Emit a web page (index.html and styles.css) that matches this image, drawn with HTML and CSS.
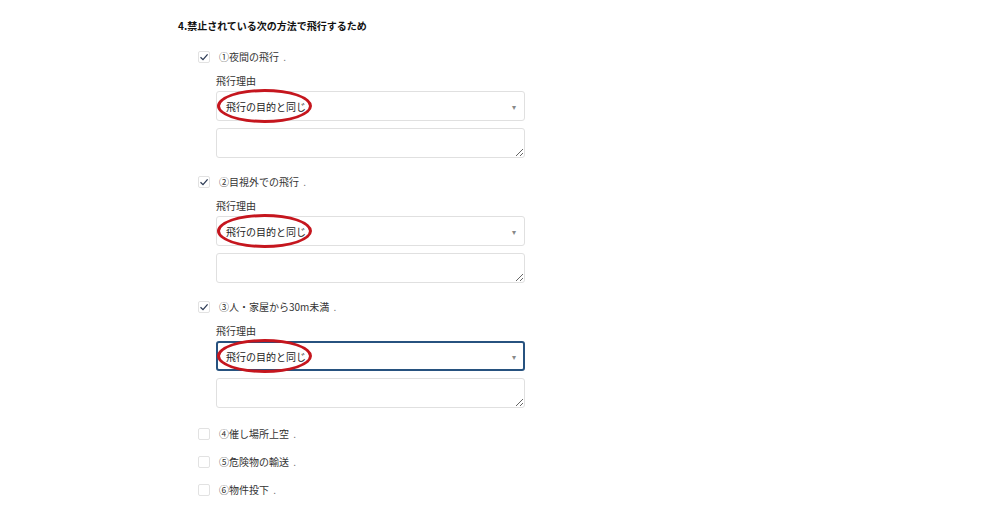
FILE: index.html
```html
<!DOCTYPE html>
<html lang="ja">
<head>
<meta charset="utf-8">
<link rel="stylesheet" href="styles.css">
</head>
<body>
<div class="page">
  <h2 class="heading">4.禁止されている次の方法で飛行するため</h2>

  <div class="item item--open">
    <div class="row">
      <span class="cb cb--on"><svg viewBox="0 0 12 12" width="12" height="12"><path d="M2.5 6.2 L5 8.6 L9.6 3.4" fill="none" stroke="#2d3b55" stroke-width="1.3"/></svg></span>
      <span class="label">①夜間の飛行<span class="dot"> .</span></span>
    </div>
    <div class="sub">
      <div class="field-label">飛行理由</div>
      <div class="select-wrap">
        <div class="select"><span>飛行の目的と同じ</span><span class="arrow">▾</span></div>
        <span class="ring"></span>
      </div>
      <textarea class="ta"></textarea>
    </div>
  </div>

  <div class="item item--open">
    <div class="row">
      <span class="cb cb--on"><svg viewBox="0 0 12 12" width="12" height="12"><path d="M2.5 6.2 L5 8.6 L9.6 3.4" fill="none" stroke="#2d3b55" stroke-width="1.3"/></svg></span>
      <span class="label">②目視外での飛行<span class="dot"> .</span></span>
    </div>
    <div class="sub">
      <div class="field-label">飛行理由</div>
      <div class="select-wrap">
        <div class="select"><span>飛行の目的と同じ</span><span class="arrow">▾</span></div>
        <span class="ring"></span>
      </div>
      <textarea class="ta"></textarea>
    </div>
  </div>

  <div class="item item--open item--last">
    <div class="row">
      <span class="cb cb--on"><svg viewBox="0 0 12 12" width="12" height="12"><path d="M2.5 6.2 L5 8.6 L9.6 3.4" fill="none" stroke="#2d3b55" stroke-width="1.3"/></svg></span>
      <span class="label">③人・家屋から30m未満<span class="dot"> .</span></span>
    </div>
    <div class="sub">
      <div class="field-label">飛行理由</div>
      <div class="select-wrap">
        <div class="select select--focus"><span>飛行の目的と同じ</span><span class="arrow">▾</span></div>
        <span class="ring"></span>
      </div>
      <textarea class="ta"></textarea>
    </div>
  </div>

  <div class="item">
    <div class="row">
      <span class="cb"></span>
      <span class="label">④催し場所上空<span class="dot"> .</span></span>
    </div>
  </div>
  <div class="item">
    <div class="row">
      <span class="cb"></span>
      <span class="label">⑤危険物の輸送<span class="dot"> .</span></span>
    </div>
  </div>
  <div class="item">
    <div class="row">
      <span class="cb"></span>
      <span class="label">⑥物件投下<span class="dot"> .</span></span>
    </div>
  </div>
</div>
</body>
</html>
```

FILE: styles.css
```css
* { box-sizing: border-box; }
html, body { margin: 0; padding: 0; background: #fff; }
body {
  font-family: "Noto Sans CJK JP", "Noto Sans", sans-serif;
  font-size: 10px;
  color: #222;
}
.page {
  padding: 19px 0 0 178px;
  width: 990px;
  height: 521px;
  overflow: hidden;
}
.heading {
  margin: 0 0 10px 0;
  font-size: 10px;
  line-height: 14px;
  font-weight: 700;
  color: #111;
}
.item { display: flex; flex-direction: column; }
.item--open { margin-bottom: 10px; }
.item--last { margin-bottom: 12px; }
.row {
  height: 28px;
  display: flex;
  align-items: center;
  padding-left: 20px;
}
.cb {
  width: 12px;
  height: 12px;
  border: 1px solid #e2e2e2;
  border-radius: 2px;
  background: #fff;
  display: inline-flex;
  align-items: center;
  justify-content: center;
  margin-right: 9px;
}
.cb svg { display: block; margin: -1px; }
.label { color: #333; line-height: 14px; }
.dot { color: #777; margin-left: 2px; }
.sub {
  padding-left: 38px;
  display: flex;
  flex-direction: column;
}
.field-label {
  margin-top: 3px;
  line-height: 14px;
  color: #333;
}
.select-wrap {
  position: relative;
  margin-top: 3px;
  width: 309px;
}
.select {
  height: 30px;
  border: 1px solid #e0e0e0;
  border-radius: 3px;
  display: flex;
  align-items: center;
  justify-content: space-between;
  padding: 0 8px 0 9px;
  color: #222;
  background: #fff;
}
.select--focus {
  border: 2px solid #27527f;
  padding: 0 7px 0 8px;
}
.arrow { color: #888; font-size: 8px; }
.ring {
  position: absolute;
  left: 1px;
  top: -2px;
  width: 95px;
  height: 34px;
  border: 3px solid #c5161e;
  border-radius: 50%;
  pointer-events: none;
}
.ta {
  display: block;
  margin: 7px 0 0 0;
  width: 309px;
  height: 30px;
  border: 1px solid #e0e0e0;
  border-radius: 3px;
  resize: vertical;
  font: inherit;
  padding: 4px;
  outline: none;
}
```
